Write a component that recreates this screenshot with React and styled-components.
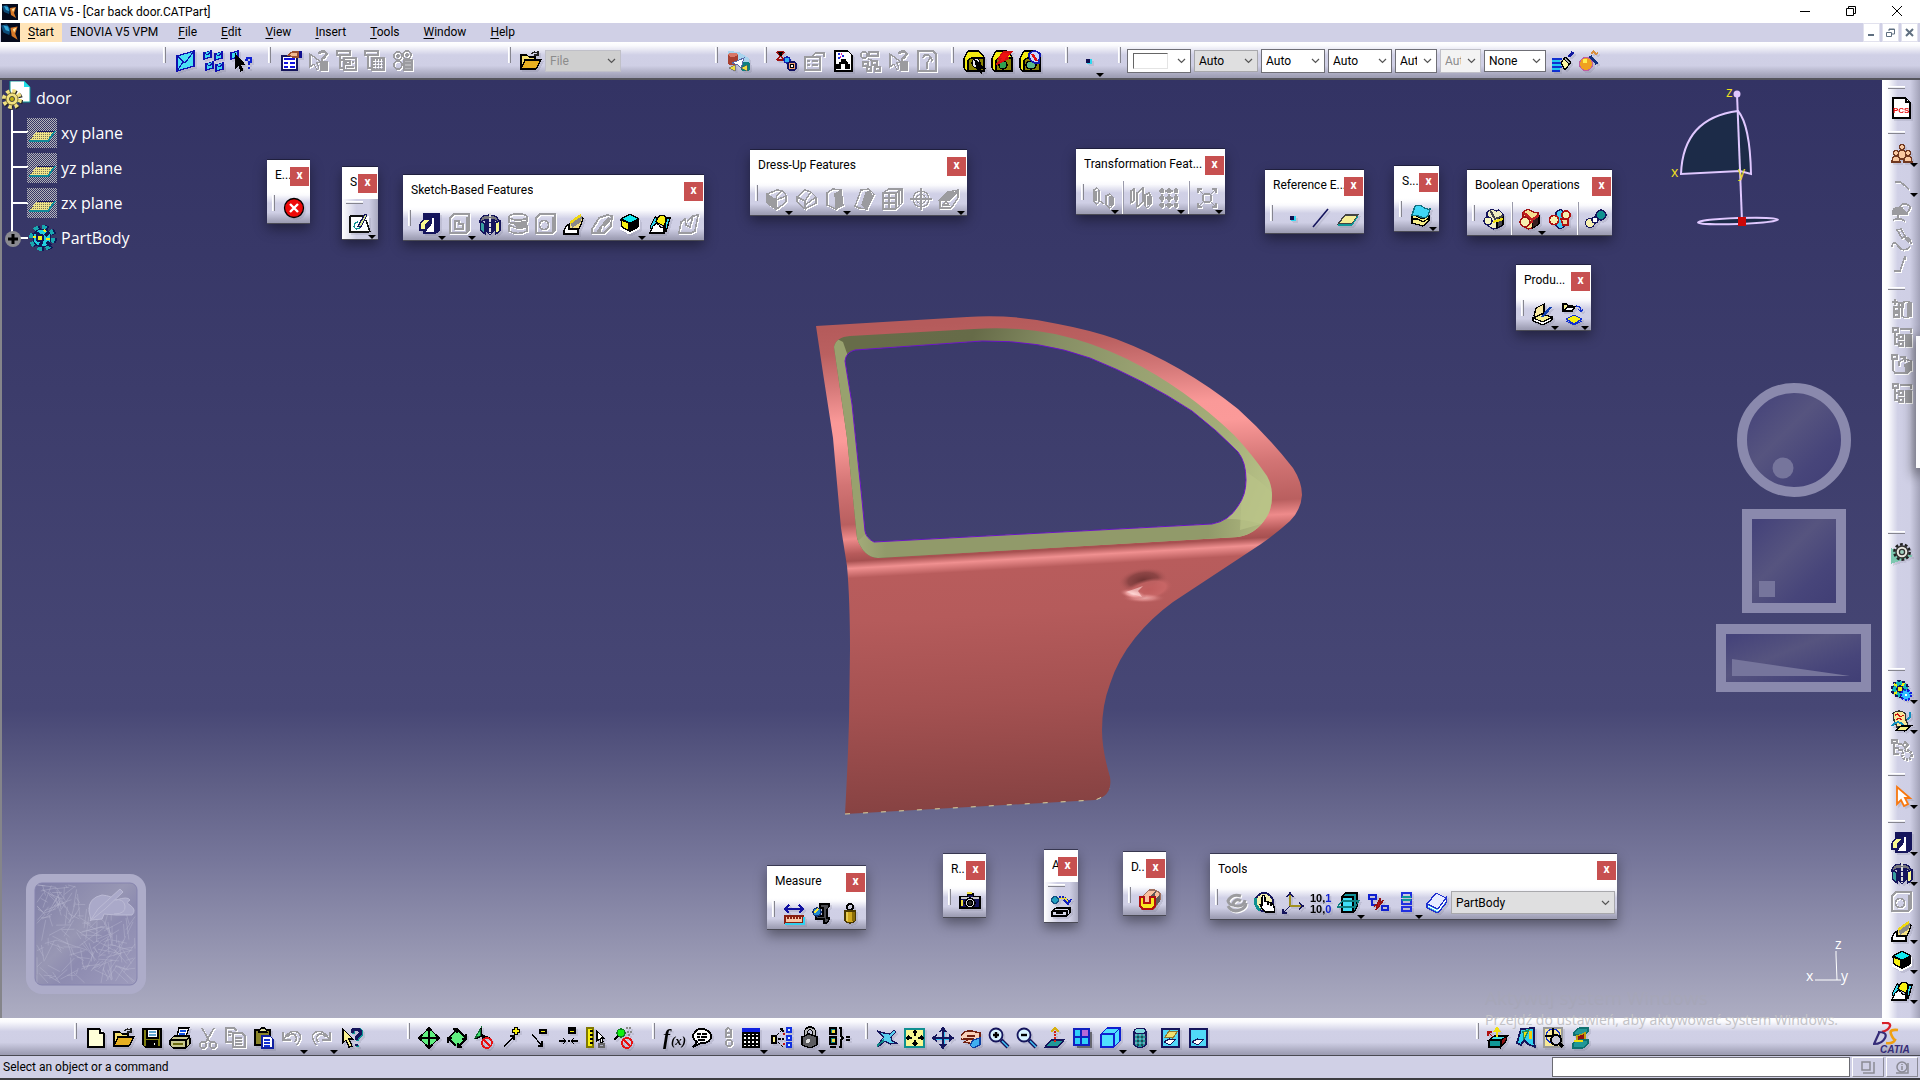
import React from "react";
import styled, { createGlobalStyle, css } from "styled-components";

const GlobalStyle = createGlobalStyle`
  * {
    box-sizing: border-box;
  }
  body {
    margin: 0;
    overflow: hidden;
    font-family: Roboto, "Open Sans", sans-serif;
    font-size: 12px;
    color: #000;
  }
  button, select, input {
    font: inherit;
    color: inherit;
  }
`;

const steelAcross = css`
  background: linear-gradient(
    to bottom,
    #ffffff 0,
    #fafafd 10%,
    #d0d0e6 36%,
    #cfcfe5 66%,
    #a2a2b8 94%,
    #9c9cb2 100%
  );
`;

const steelDown = css`
  background: linear-gradient(
    to right,
    #ffffff 0,
    #fafafd 12%,
    #d0d0e6 38%,
    #cfcfe5 72%,
    #a2a2b8 100%
  );
`;

const Page = styled.div`
  display: flex;
  flex-direction: column;
  height: 100vh;
  position: relative;
  overflow: hidden;
  background: #cfcfe5;
`;

const TitleBar = styled.header`
  display: flex;
  align-items: center;
  height: 23px;
  background: #fff;
  padding-left: 2px;
  svg {
    margin-right: 5px;
  }
`;

const WindowButtons = styled.div`
  display: flex;
  margin-left: auto;
  height: 100%;
  button {
    width: 46px;
    border: none;
    padding: 0;
    background: transparent;
    svg {
      display: block;
      margin: 0 auto 2px;
    }
  }
`;

const MenuBar = styled.nav`
  display: flex;
  align-items: stretch;
  height: 19px;
  padding-left: 1px;
  background: #d0d0e6;
`;

const MenuItem = styled.button`
  border: none;
  padding: 0 ${(p) => p.$pad || 12}px;
  line-height: 19px;
  background: ${(p) => (p.$active ? "#ffe4b8" : "transparent")};
  white-space: nowrap;
  u {
    text-underline-offset: 2px;
  }
`;

const DocButtons = styled.div`
  display: flex;
  gap: 2px;
  margin-left: auto;
  padding-right: 2px;
  button {
    width: 17px;
    padding: 0;
    border: 1px solid #e2e2ee;
    background: #fff;
    display: grid;
    place-items: center;
  }
`;

const Grip = styled.span`
  flex: none;
  width: 3px;
  height: 16px;
  margin-right: 5px;
  align-self: flex-start;
  margin-top: 3px;
  background: #ededf4;
  border-right: 1px solid #85858f;
  border-left: 1px solid #fff;
`;

const RailGrip = styled.span`
  width: 17px;
  height: 3px;
  margin: 0 0 5px 4px;
  background: #ededf4;
  border-top: 1px solid #fff;
  border-bottom: 1px solid #85858f;
`;

const TopBar = styled.div`
  display: flex;
  align-items: stretch;
  height: 38px;
  padding-top: 2px;
  border-bottom: 2px solid #55555c;
  ${steelAcross}
  ${Grip} {
    margin-right: 6px;
  }
`;

const Group = styled.div`
  display: flex;
  align-items: center;
  margin-left: ${(p) => p.$gap || 0}px;
`;

const Divider = styled.span`
  width: 2px;
  align-self: stretch;
  margin: 0 3px;
  background: #fff;
  border-right: 1px solid #9a9aaa;
`;

const Tool = styled.button`
  position: relative;
  flex: none;
  width: ${(p) => p.$w || (p.$more ? 30 : 28)}px;
  height: 28px;
  padding: 3px;
  border: none;
  background: transparent;
  text-align: left;
  svg {
    display: block;
    overflow: visible;
  }
  ${(p) =>
    p.$more &&
    css`
      &::after {
        content: "";
        position: absolute;
        right: 0;
        bottom: -2px;
        border: 4px solid transparent;
        border-top-color: #000;
        border-bottom: none;
      }
    `}
`;

const Svg = styled.svg`
  width: 22px;
  height: 22px;
  fill: none;
  stroke: #000;
  stroke-width: 1.3;
  shape-rendering: crispEdges;
  filter: ${(p) =>
    p.$off ? "drop-shadow(1px 1px 0 #fff)" : "drop-shadow(2px 2px 0 rgba(90,90,110,0.14))"};
`;

const SelectBox = styled.label`
  position: relative;
  flex: none;
  width: ${(p) => p.$w || 64}px;
  height: ${(p) => p.$h || 24}px;
  margin-right: 3px;
  color: ${(p) => (p.$off ? "#8c8c8c" : "#000")};
  select {
    appearance: none;
    display: block;
    width: 100%;
    height: 100%;
    padding: 0 19px 0 4px;
    border: 1px solid ${(p) => (p.$off ? "#c0c0c8" : p.$flat ? "#a8a8ac" : "#6f6f76")};
    border-radius: 0;
    background: ${(p) => (p.$flat ? (p.$off ? "#cfcfcf" : "#dfdfe0") : p.$off ? "#f3f3f3" : "#fff")};
    color: inherit;
    opacity: 1;
  }
  svg {
    position: absolute;
    right: 5px;
    top: 50%;
    margin-top: -3px;
    pointer-events: none;
  }
`;

const Swatch = styled.span`
  position: absolute;
  left: 6px;
  top: 4px;
  width: 35px;
  height: 16px;
  border: 1px solid #e4e4e4;
  border-top-color: #666;
  border-left-color: #666;
  background: #fff;
`;

const Middle = styled.div`
  display: flex;
  flex: 1;
  min-height: 0;
  position: relative;
`;

const Viewport = styled.main`
  position: relative;
  flex: 1;
  overflow: hidden;
  box-shadow: inset 2px 0 0 #85858a;
  background: linear-gradient(
    to bottom,
    #333364 0,
    #3c3c6b 33%,
    #474775 67%,
    #5f5f86 75%,
    #76769a 83%,
    #adadc2 100%
  );
`;

const Rail = styled.aside`
  width: 38px;
  border-left: 2px solid #fff;
  padding-top: 6px;
  ${steelDown}
`;

const RailGroup = styled.div`
  display: flex;
  flex-direction: column;
  margin-top: ${(p) => p.$gap || 0}px;
  ${Tool} {
    width: 28px;
    height: ${(p) => p.$pitch || 28}px;
    margin-left: 4px;
  }
  ${Tool}[data-more] {
    height: 30px;
    &::after {
      bottom: 2px;
      right: -2px;
    }
  }
`;

const EdgeWindow = styled.div`
  position: absolute;
  right: 0;
  top: 256px;
  width: 4px;
  height: 132px;
  background: #fbfbfd;
  box-shadow: 0 4px 12px 3px rgba(0, 0, 0, 0.45);
`;

const Tree = styled.ul`
  position: absolute;
  left: 2px;
  top: 0;
  margin: 0;
  padding: 0;
  list-style: none;
  color: #fff;
  font-family: "Open Sans", "Noto Sans", sans-serif;
  font-size: 16px;
  li {
    display: flex;
    align-items: center;
    height: 35px;
    padding-left: 25px;
  }
  li:first-child {
    padding-left: 0;
  }
  svg {
    display: block;
    margin-right: 4px;
  }
`;

const TreeLines = styled.svg`
  position: absolute;
  left: 0;
  top: 20px;
`;

const Palette = styled.section`
  position: absolute;
  left: ${(p) => p.$x}px;
  top: ${(p) => p.$y}px;
  width: ${(p) => p.$w}px;
  background: #fff;
  border-bottom: 1px solid #4a4a55;
  box-shadow: 0 -1px 0 rgba(20, 20, 40, 0.6), 0 5px 12px rgba(0, 0, 0, 0.4);
`;

const PaletteHead = styled.div`
  display: flex;
  justify-content: space-between;
  height: 32px;
  padding: 7px 1px 0 8px;
  h2 {
    margin: 0;
    min-width: 0;
    overflow: hidden;
    font-size: 12px;
    font-weight: 400;
    line-height: 16px;
    white-space: nowrap;
  }
  button {
    flex: none;
    width: 19px;
    height: 19px;
    padding: 0 0 2px;
    border: none;
    background: #c75050;
    color: #fff;
    font-size: 12px;
    font-weight: 700;
    line-height: 15px;
  }
`;

const PaletteBody = styled.div`
  display: flex;
  align-items: center;
  height: ${(p) => (p.$slim ? 31 : 33)}px;
  padding-left: 5px;
  ${steelAcross}
  ${(p) =>
    p.$column &&
    css`
      flex-direction: column;
      align-items: flex-start;
      height: 40px;
      padding: 2px 0 0 0;
      background: linear-gradient(to right, #fff 0, #cfcfe5 40%, #cfcfe5 75%, #a9a9bf 100%);
      ${Tool} {
        margin-left: 4px;
      }
    `}
`;

const DoorSvg = styled.svg`
  position: absolute;
  left: 810px;
  top: 230px;
`;

const CompassSvg = styled.svg`
  position: absolute;
  right: 94px;
  top: 5px;
  overflow: visible;
  font-family: "Open Sans", sans-serif;
  font-size: 14px;
`;

const PadsSvg = styled.svg`
  position: absolute;
  right: 10px;
  top: 300px;
`;

const SketchPadSvg = styled.svg`
  position: absolute;
  left: 26px;
  bottom: 24px;
`;

const AxisSvg = styled.svg`
  position: absolute;
  right: 31px;
  bottom: 31px;
  overflow: visible;
  font-family: "Open Sans", sans-serif;
  font-size: 14px;
`;

const BottomBar = styled.div`
  display: flex;
  align-items: stretch;
  height: 38px;
  padding: 2px 0 0 74px;
  border-bottom: 1px solid #4a4a52;
  ${steelAcross}
`;

const Logo = styled.svg`
  margin: 0 5px 0 auto;
  align-self: center;
`;

const Status = styled.footer`
  display: flex;
  align-items: center;
  gap: 2px;
  height: 24px;
  padding: 0 2px 0 3px;
  border-bottom: 2px solid #3c3c40;
  background: #d0d0e6;
  input {
    width: 298px;
    height: 20px;
    margin-left: auto;
    border: 1px solid #6b6b72;
    background: #fff;
  }
  button {
    width: 32px;
    height: 20px;
    padding: 0;
    border: 1px solid;
    border-color: #fff #8a8a96 #8a8a96 #fff;
    background: #d0d0e6;
    display: grid;
    place-items: center;
  }
`;

const Watermark = styled.div`
  position: absolute;
  right: 79px;
  bottom: 50px;
  width: 356px;
  pointer-events: none;
  white-space: nowrap;
  color: #c2c2c6;
  font-family: "Open Sans", "Noto Sans", sans-serif;
  font-size: 14px;
  line-height: 20px;
  strong {
    display: block;
    font-size: 19px;
    font-weight: 400;
    line-height: 24px;
    color: #a6a6b8;
  }
`;

const g = "#9b9b9f";
const navy = "#15155c";

const icons = {
  mail: (
    <>
      <path d="M2 6 19 1V16L2 21Z" fill="#4be0f5" stroke="#1010b0" />
      <path d="M2 6 10 13 19 1M2 21 8 12" stroke="#1010b0" />
    </>
  ),
  mails: (
    <g stroke="#1010b0" fill="#3fd8ee">
      <path d="M1 3 8 1V7L1 9ZM12 4 19 2V8L12 10ZM3 14 10 12V18L3 20ZM13 15 20 13V19L13 21Z" />
      <path d="M1 3 5 5 8 1M12 4 16 6 19 2M3 14 7 16 10 12M13 15 17 17 20 13" />
    </g>
  ),
  mailHelp: (
    <>
      <path d="M0 3 7 1V7L0 9Z" fill="#3fd8ee" stroke="#1010b0" />
      <path d="M5 5 13 14H9L12 20 10 21 8 15 5 18Z" fill="#000" />
      <path d="M14 10H16V8H20V12H18V15M17 18H19" stroke="#1020d0" strokeWidth="2.5" />
    </>
  ),
  form: (
    <>
      <rect x="2" y="6" width="15" height="14" fill="#fff" stroke={navy} />
      <path d="M4 9H15M4 13H8M10 13H15M4 17H8M10 17H15" stroke="#1010e0" strokeWidth="2" />
      <path d="M8 5 12 2H18V7H13Z" fill="#f0b890" stroke="#9a5030" />
      <path d="M20 1V8" stroke="#101090" strokeWidth="3" />
    </>
  ),
  cursorHelpOff: (
    <g stroke={g}>
      <path d="M2 4V17L6 14 9 20 11 18 9 13 13 12Z" />
      <path d="M11 4Q13 0 17 2T14 9V11" strokeWidth="2.5" />
      <path d="M13 12H19V20H13Z" fill={g} />
    </g>
  ),
  listOff: (
    <g stroke={g} strokeWidth="1.6">
      <path d="M1 1H14V5H1ZM4 5V18H8M4 10H8M8 8H20V20H8ZM10 11H14V14H10ZM10 17H18M16 12H18" />
    </g>
  ),
  list2Off: (
    <g stroke={g}>
      <path d="M1 1H14V5H1ZM4 5V18H7M8 8H20V20H8Z" strokeWidth="1.6" />
      <path d="M9 10H20M9 13H20M9 16H20M9 19H20" strokeDasharray="1.5 1.5" strokeWidth="2" />
    </g>
  ),
  gearsOff: (
    <g stroke={g} strokeWidth="1.6">
      <circle cx="6" cy="6" r="4" />
      <circle cx="15" cy="5" r="4" />
      <circle cx="6" cy="15" r="4" />
      <circle cx="15" cy="5" r="1" />
      <path d="M12 10H20V20H12ZM12 13H20M12 17H20" fill="#b6b6ba" />
      <circle cx="6" cy="6" r="1" />
    </g>
  ),
  open: (
    <>
      <path d="M1 19V5H7L9 7H15V10" fill="#f5e070" stroke="#000" />
      <path d="M1 19 5 10H21L16 19Z" fill="#e8b020" stroke="#000" />
      <path d="M11 4Q15 0 18 4M18 1V5H14" stroke="#222" />
    </>
  ),
  planes: (
    <>
      <path d="M1 1 12 2 22 8V16L1 10Z" fill="#a9d4ee" stroke="none" />
      <ellipse cx="6" cy="5" rx="5" ry="2.4" fill="#d87868" stroke="none" />
      <path d="M1 5V14Q6 17 11 14V5Q6 9 1 5" fill="#a84030" stroke="none" />
      <path d="M14 13V20Q18 23 23 20V13Q18 10 14 13" fill="#108080" stroke="none" />
      <path d="M5 13 17 8 14 18 11 15Z" fill="#fff" stroke="#5868a8" strokeWidth="1" />
      <path d="M2 18 8 15V21ZM20 15 14 18 20 21Z" fill="#f0e040" stroke="#555" strokeWidth=".6" />
    </>
  ),
  gearFlow: (
    <>
      <path d="M1 2H8M1 10H8M1 2 8 10M8 2 1 10" stroke="#a01010" strokeWidth="1.6" />
      <path d="M3 3H6L5 6Z" fill="#18a0a0" />
      <circle cx="11" cy="10" r="3" fill="#30b0f0" stroke="#1020b0" />
      <circle cx="16" cy="16" r="4.5" fill="#f0a070" stroke="#101060" strokeWidth="2" />
      <circle cx="16" cy="16" r="1.5" fill="#fff" />
    </>
  ),
  formOff: (
    <g stroke={g} strokeWidth="1.6">
      <path d="M1 7H16V20H1ZM3 11H6M8 11H14M3 15H6M8 15H14M8 6 12 3H20V7" />
    </g>
  ),
  pageGraph: (
    <>
      <path d="M3 1H16L20 5V21H3Z" fill="#fff" />
      <path d="M7 14 12 10 16 14" strokeWidth="2" />
      <path d="M5 15H8V18H5ZM14 15H17V18H14ZM10 10H13V13H10Z" fill="#000" />
      <path d="M6 4H8M10 6H12M6 8H8" stroke="#2030e0" strokeWidth="2" />
      <path d="M9 4H10M8 7H9" stroke="#e020a0" strokeWidth="2" />
    </>
  ),
  treeOff: (
    <g stroke={g} strokeWidth="1.6">
      <circle cx="4" cy="5" r="3" />
      <path d="M9 2H18V6H9ZM8 9 14 11M3 12H8V16H3ZM12 11H17V15H12ZM7 17H11V21H7ZM15 17H20V21H15Z" />
    </g>
  ),
  pageHelpOff: (
    <g stroke={g} strokeWidth="1.6">
      <path d="M2 1H17L20 4V21H2Z" />
      <path d="M7 8Q8 4 12 5T11 13V19M15 8Q17 10 15 12" />
    </g>
  ),
  blockA: (
    <>
      <path d="M1 8 5 1H16L21 7V21H3L1 18Z" fill="#f4ec10" />
      <path d="M8 8H21V21H5V10Z" fill="#8a8400" />
      <ellipse cx="13" cy="13" rx="4" ry="4.5" fill="#e8e8f0" />
      <path d="M12 10 21 18 17 18 18 23 14 19Z" fill="#000" />
    </>
  ),
  blockB: (
    <>
      <path d="M1 8 5 1H16L21 7V21H3L1 18Z" fill="#f4ec10" />
      <path d="M8 8H21V21H5V10Z" fill="#8a8400" />
      <ellipse cx="12" cy="15" rx="4" ry="4" fill="#30a050" />
      <path d="M12 2H21L15 8H18L5 15 10 9H7Z" fill="#f01010" stroke="#d01010" />
    </>
  ),
  blockC: (
    <>
      <path d="M1 8 5 1H16L21 7V21H3L1 18Z" fill="#f4ec10" />
      <path d="M8 8H21V21H5V10Z" fill="#8a8400" />
      <ellipse cx="12" cy="15" rx="5" ry="4" fill="#58b888" />
      <path d="M10 4Q16 -2 21 4L20 13Q10 14 10 4Z" fill="#c8d8ff" stroke="#1018b0" strokeWidth="1.8" />
      <path d="M13 4 18 11" stroke="#e01010" strokeWidth="2.4" />
    </>
  ),
  point: (
    <>
      <rect x="10" y="9" width="5" height="5" fill="#30d8f0" stroke="none" />
      <rect x="9" y="9" width="4" height="4" fill="#101050" stroke="none" />
    </>
  ),
  brush: (
    <>
      <path d="M0 9H10M0 13H12M0 17H10M0 21H8" stroke="#1030d0" strokeWidth="2" />
      <path d="M0 11H8M0 15H9M0 19H8" stroke="#20c8f0" strokeWidth="1.6" />
      <path d="M9 13 13 7 19 12 13 20Z" fill="#fff6a0" />
      <path d="M13 7 19 12 17 14 12 9Z" fill="#b0b0b0" />
      <path d="M17 7 21 2" stroke="#1018a0" strokeWidth="3" />
    </>
  ),
  ball: (
    <>
      <circle cx="6" cy="14" r="6.5" fill="#f0a020" stroke="#c060a0" />
      <circle cx="5" cy="11" r="2.5" fill="#ffee50" stroke="none" />
      <path d="M10 6 17 14" stroke="#103080" strokeWidth="3" />
      <path d="M11 3H18M13 1 17 5" stroke="#d89040" strokeDasharray="2 1" strokeWidth="2" />
    </>
  ),
  exit: (
    <>
      <circle cx="11" cy="11" r="9.5" fill="#ee0808" shapeRendering="auto" />
      <path d="M7 7 15 15M15 7 7 15" stroke="#fff" strokeWidth="2.4" shapeRendering="auto" />
    </>
  ),
  sketch: (
    <>
      <path d="M1 4H20V21H1Z" fill="#fff" stroke="none" />
      <path d="M1 4H14M1 4V20H20" stroke="#111" />
      <path d="M21 20 17 8" stroke="#111" />
      <path d="M5 15Q5 10 9 10M12 13Q11 17 7 17L5 15" stroke="#109090" />
      <path d="M9 14 16 2 18 3 12 15Z" fill="#d8e890" stroke={navy} />
    </>
  ),
  pad: (
    <>
      <path d="M5 1H20V18L17 20H5Z" fill={navy} stroke={navy} />
      <path d="M5 4H16V20H5Z" fill="#fff" stroke={navy} />
      <path d="M1 11 5 6H12L7 11V17H1Z" fill="#f8f890" stroke={navy} />
      <path d="M7 11 12 6V11L7 17Z" fill={navy} stroke={navy} />
    </>
  ),
  pocketOff: (
    <g stroke={g} strokeWidth="1.8">
      <path d="M1 5 5 1H20V17L17 20H1Z" />
      <path d="M6 8H10V11H14V16H6Z" />
      <path d="M18 4V19" strokeWidth="3" />
    </g>
  ),
  shaft: (
    <>
      <path d="M1 9Q1 2 10 2T20 9L15 7H6Z" fill="#77777c" stroke={navy} />
      <path d="M1 8 6 11V21L2 18Z" fill="#38a0a0" stroke={navy} />
      <path d="M7 7 10 8V21L7 18ZM12 8 15 7V18L12 21Z" fill={navy} stroke={navy} />
      <path d="M16 10 21 8V18L17 21Z" fill="#f8f890" stroke={navy} />
      <path d="M11 0V21" stroke="#ddd" strokeDasharray="4 1" />
    </>
  ),
  grooveOff: (
    <g stroke={g} strokeWidth="1.6">
      <ellipse cx="11" cy="4" rx="9" ry="3" />
      <path d="M2 4V9Q6 12 11 10L20 8V4M2 12V18Q11 23 20 18V13Q12 18 2 12" />
      <path d="M7 10 19 9V14L10 13Z" fill={g} />
    </g>
  ),
  holeOff: (
    <g stroke={g} strokeWidth="1.8">
      <path d="M1 5 5 1H20V17L17 20H1Z" />
      <circle cx="9" cy="12" r="4.5" />
      <path d="M18 4V19" strokeWidth="3" />
    </g>
  ),
  rib: (
    <>
      <path d="M6 11 17 2 20 5Q18 14 14 18L7 17Z" fill="#f4e080" />
      <path d="M8 10 19 3 18 9 9 15Z" fill="#8a8a8a" stroke="none" />
      <path d="M7 10 18 2" stroke="#f0d810" strokeWidth="2.4" />
      <path d="M1 18 4 12H6V16H15V21H1Z" fill="#fff" />
    </>
  ),
  slotOff: (
    <g stroke={g} strokeWidth="1.8">
      <path d="M1 16 8 5 16 2 21 3 20 13 13 20H8L11 12 6 20H1Z" />
      <path d="M12 13 19 5" strokeWidth="4" />
    </g>
  ),
  cube: (
    <>
      <path d="M1 15 10 20 20 15V7" stroke="#fff" strokeWidth="2.4" />
      <path d="M2 6 11 1 20 6 11 10Z" fill="#10e8f0" />
      <path d="M2 7 10 10V18L3 14Z" fill="#f8f010" />
      <path d="M12 10 19 7V14L12 18Z" fill="#000" />
    </>
  ),
  loft: (
    <>
      <path d="M1 14 6 4 9 5 4 20ZM16 12 18 5 21 5 17 19Z" fill="#30d8f0" />
      <path d="M7 9Q9 0 16 3Q18 6 15 13Z" fill="#f8f010" />
      <path d="M1 20 4 13Q8 9 10 12Q11 16 15 14L15 20Z" fill="#fff" />
    </>
  ),
  loftOff: (
    <g stroke={g} strokeWidth="1.6">
      <path d="M2 20 4 9 8 6 9 12 13 14 16 3 21 2 18 18 14 20ZM10 8 15 4M2 20H14" />
    </g>
  ),
  filletOff: (
    <g stroke={g} strokeWidth="1.4">
      <path d="M10 12 20 8V14L11 21Z" />
      <path d="M1 6 10 12V21L1 15Z" fill={g} />
      <path d="M1 6 11 2Q19 2 20 8L10 12Q10 6 15 4" />
    </g>
  ),
  chamferOff: (
    <g stroke={g} strokeWidth="1.4">
      <path d="M1 9 9 2 15 4 20 9V15L9 21 1 14ZM1 9 9 13 15 4M9 13V21M9 17 20 9" />
    </g>
  ),
  draftOff: (
    <g stroke={g} strokeWidth="1.4">
      <path d="M3 5 9 1 17 2 19 17 12 21 3 17Z" />
      <path d="M11 6 17 3 19 17 12 21Z" fill={g} />
    </g>
  ),
  shellOff: (
    <g stroke={g} strokeWidth="1.4">
      <path d="M1 18 7 2 15 1 20 6 13 21 5 20Z" />
      <path d="M8 17 12 5 16 3 18 8 12 20Z" fill={g} />
    </g>
  ),
  thickOff: (
    <g stroke={g} strokeWidth="1.4">
      <path d="M1 5 7 1H20V15L14 21H1ZM1 5H14V21M14 5 20 1M1 10H14M1 15H14M7 5V21M17 3V17" />
    </g>
  ),
  threadOff: (
    <g stroke={g} strokeWidth="1.4">
      <circle cx="11" cy="11" r="8" />
      <circle cx="11" cy="11" r="4.5" />
      <path d="M11 0V22M0 11H22" />
    </g>
  ),
  replaceOff: (
    <g stroke={g} strokeWidth="1.4">
      <path d="M2 12 10 4 20 2V10L13 20H2Z" />
      <path d="M2 12 9 5 19 4 12 12Z" fill={g} />
      <path d="M5 17 8 13 11 17Z" />
    </g>
  ),
  moveOff: (
    <g stroke={g} strokeWidth="1.4">
      <path d="M2 3 5 1 7 3V15L5 17 2 15ZM4 4V14M8 14 12 17M14 9 18 7 21 10V18L18 21 14 18Z" />
      <path d="M18 9V19" strokeWidth="3" />
    </g>
  ),
  mirrorOff: (
    <g stroke={g} strokeWidth="1.4">
      <path d="M1 4 4 2V14L1 16ZM7 6 13 1V15L7 20ZM15 8 19 6 21 10V17L17 21 15 19Z" />
      <path d="M18 9V18" strokeWidth="3" />
    </g>
  ),
  patternOff: (
    <g stroke={g} strokeWidth="1.4">
      <path d="M1 4H20M1 11H20M1 18H20M4 1V21M11 1V21M18 1V21" strokeDasharray="2 1" />
      <path d="M3 3H5V5H3ZM10 3H12V5H10ZM17 3H19V5H17ZM3 10H5V12H3ZM10 10H12V12H10ZM17 10H19V12H17ZM3 17H5V19H3ZM10 17H12V19H10ZM17 17H19V19H17Z" fill={g} />
    </g>
  ),
  scaleOff: (
    <g stroke={g} strokeWidth="1.4">
      <circle cx="11" cy="11" r="4.5" strokeWidth="2" />
      <path d="M2 6V2H6M2 2 7 7M16 2H20V6M20 2 15 7M2 16V20H6M2 20 7 15M20 16V20H16M20 20 15 15" />
    </g>
  ),
  line: <path d="M4 20 19 2" stroke={navy} strokeWidth="1.6" shapeRendering="auto" />,
  plane: (
    <>
      <path d="M1 17 8 8H21L15 17Z" fill="#f6ee98" stroke="#444" />
      <path d="M1 18H15L21 9" stroke="#109898" />
    </>
  ),
  surface: (
    <>
      <path d="M2 12 5 11 12 15 19 12V17L13 22 2 19Z" fill="#f6ee88" />
      <path d="M2 15 8 15 13 18 19 14" />
      <path d="M5 2Q9 0 13 3T20 5L18 12Q15 15 11 13T2 11Z" fill="#40d8f8" stroke="#107080" />
    </>
  ),
  boolA: (
    <>
      <path d="M4 4 9 1 13 3 16 2 20 6V17L15 20 10 21 4 17Z" fill="#f0eec0" stroke={navy} />
      <path d="M14 12 20 9V17L14 20Z" fill="#44444c" />
      <path d="M7 2 12 11 20 8" stroke="#44444c" strokeWidth="2" />
      <path d="M10 14 20 11" stroke="#f0e010" strokeWidth="2.4" />
      <ellipse cx="5" cy="13" rx="4" ry="4" fill="#f6f6c0" stroke={navy} />
    </>
  ),
  boolB: (
    <>
      <path d="M4 4 9 1 14 4 19 5V17L13 20 9 21 4 18Z" fill="#f6e090" stroke="#a01010" />
      <path d="M13 12 20 8V16L14 20Z" fill="#3a2020" />
      <path d="M4 4 13 12 20 7" stroke="#c02020" strokeWidth="2.4" />
      <path d="M9 15 14 14" stroke="#c02020" strokeWidth="2" />
      <ellipse cx="6" cy="14" rx="5" ry="5" fill="#f6f0b0" stroke="#a01010" />
    </>
  ),
  boolC: (
    <>
      <path d="M7 4 12 1 15 5V19L11 21 7 18Z" fill="#40c8f0" stroke={navy} />
      <circle cx="17" cy="7" r="4" fill="#f6f0b0" stroke="#b01010" strokeWidth="1.8" />
      <path d="M12 11H19V17H14Z" fill="#f0d8a0" stroke="#b01010" />
      <circle cx="5" cy="12" r="4.5" fill="#f6f0b0" stroke="#b01010" strokeWidth="1.8" />
    </>
  ),
  boolD: (
    <>
      <circle cx="5" cy="15" r="4.5" fill="#f6f0b0" stroke={navy} />
      <circle cx="10" cy="12" r="3" fill="#fff" stroke={navy} />
      <circle cx="16" cy="7" r="5" fill="#109090" stroke={navy} />
    </>
  ),
  bookPen: (
    <>
      <path d="M2 13 4 5 12 1V11L7 16Z" fill="#f8e8a0" />
      <path d="M1 15 10 11 20 14 11 20Z" fill="#f6f090" />
      <path d="M1 15V18L11 22 20 17V14L11 19Z" fill="#fff" />
      <path d="M10 14 19 4" stroke="#1040b0" strokeWidth="2.4" />
    </>
  ),
  bookMove: (
    <>
      <path d="M1 8V1H5L6 3H10V8Z" fill="#f6f090" />
      <path d="M2 8 5 4H13L10 8Z" fill="#fff" />
      <path d="M14 3Q19 3 19 8M16 6 19 9 21 6" stroke="#1030d0" />
      <path d="M4 16 12 12 20 16 12 21Z" fill="#f8f010" stroke="#1030d0" />
      <path d="M4 18 12 22 20 18" stroke="#1030d0" />
    </>
  ),
  ruler: (
    <>
      <path d="M2 6H20M6 2 2 6 6 10M16 2 20 6 16 10" stroke="#1010a0" strokeWidth="1.6" />
      <path d="M2 13H20V20H2Z" fill="#f8c8a8" stroke="#8a2010" />
      <path d="M5 13V16M8 13V16M11 13V16M14 13V16M17 13V16" stroke="#8a2010" />
      <path d="M2 21H21V14" stroke="#30d0f0" strokeWidth="1.6" />
    </>
  ),
  caliper: (
    <>
      <path d="M9 1H18V4L16 6V15H18V17L16 20H13V16H5V13H12V5H9Z" fill="#4a4a50" />
      <circle cx="6" cy="9" r="4" fill="#2088d0" stroke="#103070" />
      <path d="M3 10 7 6" stroke="#f0e840" strokeWidth="2" />
    </>
  ),
  weight: (
    <>
      <circle cx="11" cy="4" r="3" strokeWidth="2" />
      <path d="M6 8H16V18Q11 22 6 18Z" fill="#d0a820" stroke="#4a3800" />
      <path d="M14 9V18" stroke="#8a6c08" strokeWidth="3" />
      <path d="M8 9V18" stroke="#e8cc50" strokeWidth="2" />
    </>
  ),
  camera: (
    <>
      <path d="M1 6H8L9 3H14L15 6H21V17H1Z" fill={navy} stroke="#000" />
      <path d="M2 7H20" stroke="#c8c8c8" strokeWidth="2" />
      <circle cx="11" cy="12" r="5" fill="#d8d8e0" />
      <circle cx="11" cy="12" r="2.6" fill="#222" />
      <path d="M8 2H13M3 9V15" stroke="#f0e040" />
    </>
  ),
  applyBox: (
    <>
      <circle cx="4" cy="5" r="3.4" fill="#20a0c0" stroke="#105080" />
      <path d="M8 3H14L18 7" stroke="#f0e040" strokeWidth="2" />
      <path d="M8 2H14L18 6" stroke="#1020c0" strokeDasharray="2 1" />
      <path d="M13 5 17 9 20 4" stroke="#1020c0" strokeWidth="2" />
      <path d="M1 16 5 13H19V18L16 21H1ZM1 16H16V21M16 16 19 13M5 18H12" fill="#d8d8ea" />
    </>
  ),
  channel: (
    <>
      <path d="M2 9 10 1H16L21 4V11L15 20H3Z" fill="#f8c0a0" stroke="#a07060" />
      <path d="M10 9 17 1 15 12ZM15 12 21 5V12L15 19Z" fill="#605858" stroke="none" />
      <path d="M1 8H5V14H11V8H16V17L13 20H4L1 17Z" fill="#f8e820" stroke="#b01010" strokeWidth="1.8" />
    </>
  ),
  swirlOff: (
    <g stroke={g} strokeWidth="3" shapeRendering="auto">
      <path d="M15 9Q11 6 8 10T12 14Q18 14 19 8M7 13Q3 13 2 9Q6 1 15 4" />
      <path d="M2 14Q6 21 14 18Q20 16 20 11" />
    </g>
  ),
  hand: (
    <>
      <circle cx="10" cy="10" r="9" fill="#f4f0b0" stroke={navy} strokeWidth="2" />
      <path d="M2 6Q0 14 6 18" stroke="#109090" strokeWidth="3" />
      <path d="M8 13V5Q10 2 11 5V9L18 11Q21 13 20 20H11Q8 17 6 13Z" fill="#fff" />
      <path d="M14 10V13M17 11V14" />
    </>
  ),
  axes: (
    <>
      <path d="M8 3V14H20" stroke="#a09020" strokeWidth="1.6" />
      <path d="M8 14 1 21" stroke={navy} />
      <path d="M5 5 8 1 11 5M17 11 21 14 17 17M1 17V21H5" stroke={navy} strokeWidth="1.6" />
    </>
  ),
  numbers: (
    <g stroke="none" fontFamily="Liberation Sans, sans-serif" fontSize="11" fontWeight="700">
      <text x="0" y="10" fill="#000">10,<tspan fill="#1020d0">1</tspan></text>
      <text x="0" y="21" fill="#000">10,<tspan fill="#1020d0">0</tspan></text>
    </g>
  ),
  book: (
    <>
      <path d="M4 5 7 1H19V15L16 20H4Z" fill="#109098" />
      <path d="M4 5H15V20H4Z" fill="#40e0f8" />
      <path d="M0 14 4 9H21L17 15H0Z" stroke="#108080" />
    </>
  ),
  flash: (
    <>
      <path d="M1 3H8V7H1ZM4 7V13H8" stroke="#1020d0" />
      <path d="M14 14H20V18H14Z" stroke="#1020d0" />
      <path d="M9 12 12 6 12 10 15 9 8 18 9 13 6 14Z" fill="#c01010" stroke="#901010" />
    </>
  ),
  stack: (
    <>
      <path d="M6 1H15V5H6ZM6 15H15V19H6Z" stroke="#2030e0" strokeWidth="1.6" />
      <path d="M6 8H15V12H6Z" stroke="#2030e0" strokeWidth="1.6" />
      <path d="M6 5H15M6 8H15" stroke="#109898" />
    </>
  ),
  eraser: (
    <>
      <path d="M1 12 10 1 20 6 12 17Z" fill="#e8ecff" stroke="#2030d0" />
      <path d="M1 12V16L12 21 20 11V6L12 17Z" fill="#60d8e8" stroke="#2030d0" />
      <path d="M2 14 12 19 20 8" stroke="#fff" />
    </>
  ),
  newFile: (
    <>
      <path d="M3 2H15L19 6V20H3Z" fill="#ffffd8" />
      <path d="M15 2V6H19" fill="#fff" />
    </>
  ),
  save: (
    <>
      <path d="M2 2H20V20H4L2 18Z" fill="#808010" />
      <path d="M6 2H17V11H6Z" fill="#fff" />
      <path d="M8 5H15M8 8H15" stroke="#60a8d0" />
      <path d="M6 14H16V20H6Z" fill="#000" />
      <path d="M12 15H15V19H12Z" fill="#fff" />
    </>
  ),
  print: (
    <>
      <path d="M8 9 10 1H20L17 10Z" fill="#fff" />
      <path d="M11 4H17M10 7H16" stroke="#1050e0" />
      <path d="M1 13 5 9H20L21 12V17L17 21H4L1 18Z" fill="#c8c890" />
      <path d="M1 13H17L21 10M17 13V21" />
      <path d="M4 17H14" stroke="#6a6a10" strokeWidth="2.4" />
    </>
  ),
  cutOff: (
    <g stroke={g} strokeWidth="1.6">
      <path d="M5 1 13 15M17 1 9 15" />
      <circle cx="6" cy="18" r="3" />
      <circle cx="16" cy="18" r="3" />
    </g>
  ),
  copyOff: (
    <g stroke={g} strokeWidth="1.6">
      <path d="M7 15H1V1H9L12 4M8 6H17L20 9V20H8ZM10 11H17M10 14H17M10 17H17M3 5H7M3 8H6" />
    </g>
  ),
  paste: (
    <>
      <path d="M2 3H17V18H2Z" fill="#8a8428" />
      <path d="M6 5 8 1H12L14 5Z" fill="#e0e0a0" />
      <path d="M9 9H17L20 12V21H9Z" fill="#fff" stroke="#1020a0" />
      <path d="M11 13H17M11 16H17M11 19H17" stroke="#1030d0" />
    </>
  ),
  undoOff: (
    <g stroke={g} strokeWidth="1.6">
      <path d="M2 5V13H10M2 13Q9 2 16 5T16 18M6 10Q11 5 14 8T14 15" />
    </g>
  ),
  redoOff: (
    <g stroke={g} strokeWidth="1.6">
      <path d="M19 5V13H11M19 13Q12 2 5 5T5 18M15 10Q10 5 7 8T7 15" />
    </g>
  ),
  whatsThis: (
    <>
      <path d="M2 2V16L5 13 8 20 11 19 8 12H12Z" fill="#f8f090" />
      <path d="M12 7V4L14 2H18L20 4V8L16 12V14M16 18V20" stroke="#109898" strokeWidth="3" />
      <path d="M11 6V4L13 2H17L19 4V7L15 11V13M15 17V19" stroke={navy} strokeWidth="3" />
    </>
  ),
  moveDiamond: (
    <>
      <path d="M11 1 21 11 11 21 1 11Z" fill="#60f080" />
      <path d="M11 1V21M1 11H21M8 4 11 1 14 4M8 18 11 21 14 18M4 8 1 11 4 14M18 8 21 11 18 14" strokeWidth="1.7" />
    </>
  ),
  turnDiamond: (
    <>
      <path d="M11 2 20 11 11 20 2 11Z" fill="#60f080" stroke="none" />
      <path d="M2 12 10 3M7 2 11 2 11 6M12 3 20 11M20 7V12H16M20 12 12 20M16 20H12V16M10 19 2 11M2 16V11H6" strokeWidth="1.7" />
    </>
  ),
  noMove: (
    <>
      <path d="M1 11 7 1V9Z" fill="#40e070" stroke="#107030" />
      <path d="M7 1 8 8 16 11H8" fill="#208040" />
      <path d="M1 12 8 9 16 12" />
      <circle cx="13" cy="16" r="5" stroke="#e81010" strokeWidth="1.6" />
      <path d="M10 13 16 19" stroke="#e81010" strokeWidth="1.6" />
    </>
  ),
  arrowPlus: (
    <>
      <path d="M2 20 12 9M8 9H12V13" />
      <path d="M14 0V8M10 4H18" stroke="#000" strokeWidth="4" />
      <path d="M14 1V7M11 4H17" stroke="#f8f010" strokeWidth="2" />
    </>
  ),
  arrowMinus: (
    <>
      <path d="M2 7 12 19M12 14V19H8" />
      <path d="M10 3H16V6H10Z" fill="#f8f010" />
    </>
  ),
  arrowEqual: (
    <>
      <path d="M1 14H8M5 11 8 14 5 17M20 14H13M16 11 13 14 16 17M10 14H12" />
      <path d="M11 1H17V6H11ZM11 3H17" fill="#f8f010" />
    </>
  ),
  rulerPick: (
    <>
      <path d="M1 1H7V20H1Z" fill="#f8f010" stroke="#807800" />
      <path d="M4 4H7M4 8H7M4 12H7M4 16H7" />
      <path d="M11 4V14L14 12 15 16 17 15 16 11H18Z" fill="#fff" />
      <path d="M13 17H18V20H13Z" stroke="#666" />
    </>
  ),
  noEntry: (
    <>
      <circle cx="7" cy="6" r="4" fill="#10f010" stroke="#108020" />
      <path d="M4 9 0 13" strokeWidth="2.5" />
      <path d="M12 1H18M13 5H18M14 8H17" stroke="#888" strokeDasharray="2 1" />
      <circle cx="13" cy="16" r="5" stroke="#e81010" strokeWidth="1.6" />
      <path d="M10 13 16 19" stroke="#e81010" strokeWidth="1.6" />
    </>
  ),
  formula: (
    <g stroke="none" fill="#000" fontFamily="Liberation Serif, serif" fontStyle="italic" fontWeight="700">
      <text x="0" y="17" fontSize="21">f</text>
      <text x="8" y="18" fontSize="13">(x)</text>
    </g>
  ),
  comment: (
    <>
      <path d="M2 20 6 15Q-1 11 4 5T17 4Q23 9 18 14Q14 17 10 16Z" fill="#fff" strokeWidth="1.8" />
      <path d="M6 7H10M11 7H16M6 10H9M10 10H16M7 13H14" />
    </>
  ),
  figureOff: (
    <g stroke={g} strokeWidth="1.6">
      <path d="M7 10V3L9 1 12 3V10ZM7 6H12" />
      <circle cx="10" cy="16" r="3" />
    </g>
  ),
  table: (
    <>
      <path d="M2 2H18V6H2Z" fill="#1020e0" stroke="#1020e0" />
      <path d="M2 6H18V20H2ZM2 9H18M2 13H18M2 17H18M6 6V20M10 6V20M14 6V20" fill="#fff" />
    </>
  ),
  relations: (
    <>
      <path d="M1 9H5V16H1Z" fill="#f8f090" />
      <path d="M6 8 12 2M9 2H12V5M7 12H13M7 15 12 20" strokeDasharray="3 1" />
      <path d="M16 1H20V5H16ZM16 9H20V13H16ZM16 16H20V20H16Z" stroke="#1030e0" fill="#d8f4ff" />
      <path d="M12 7H14M12 17H14" stroke="#c01010" strokeWidth="2" />
    </>
  ),
  lock: (
    <>
      <path d="M7 9V4Q11 -2 15 4V9" strokeWidth="4" />
      <path d="M7 9V4Q11 -1 15 4V9" stroke="#b8b8b8" strokeWidth="1.6" />
      <path d="M3 10 10 7 18 10V18L11 21 3 18Z" fill="#5c5c60" />
      <circle cx="9" cy="14" r="2" fill="#ddd" stroke="none" />
    </>
  ),
  brace: (
    <>
      <path d="M1 1H7V7H1ZM1 10H7V17H1Z" fill="#108888" />
      <path d="M3 3H6V6H3ZM3 12H6V15H3Z" fill="#f0e040" stroke="none" />
      <path d="M10 1H12V9L14 11 12 13V20H10M17 10H21M17 13H21M1 20H7" strokeWidth="1.5" />
    </>
  ),
  fly: (
    <>
      <path d="M1 4 8 6 14 7 18 3 20 5 15 10 16 14 21 16 14 17 9 14 3 19 5 13 8 10Z" fill="#58d0f0" stroke={navy} />
      <path d="M1 19 8 13" stroke="#108888" strokeWidth="2" />
    </>
  ),
  fit: (
    <>
      <path d="M1 2H20V20H1Z" fill="#f8f890" stroke="#109090" strokeWidth="2" />
      <path d="M11 4V9M9 6 11 4 13 6M11 13V18M9 16 11 18 13 16M3 11H8M5 9 3 11 5 13M14 11H19M17 9 19 11 17 13" strokeWidth="1.6" />
    </>
  ),
  pan: (
    <>
      <path d="M11 2V20M2 11H20" stroke="#30c0f0" strokeWidth="3" />
      <path d="M11 2V20M2 11H20M8 5 11 1 14 5M8 17 11 21 14 17M5 8 1 11 5 14M17 8 21 11 17 14" stroke={navy} strokeWidth="1.8" />
    </>
  ),
  rotate: (
    <>
      <path d="M1 9Q4 3 12 4L20 6V14L14 17 4 15 8 13 1 12" fill="#f8d0b8" stroke="#702010" />
      <path d="M3 12H14M7 9H15" stroke="#702010" />
      <path d="M13 13 20 11V18L13 21 10 18Z" fill="#40b0f0" stroke="#1040a0" />
    </>
  ),
  zoomIn: (
    <g shapeRendering="auto">
      <circle cx="8" cy="8" r="6.5" fill="#d8f4ff" stroke={navy} strokeWidth="1.8" />
      <path d="M13 13 20 20" stroke={navy} strokeWidth="4" />
      <path d="M14 14 20 20" stroke="#40c8f8" strokeWidth="1.4" />
      <path d="M8 5V11M5 8H11" strokeWidth="2.4" />
    </g>
  ),
  zoomOut: (
    <g shapeRendering="auto">
      <circle cx="8" cy="8" r="6.5" fill="#d8f4ff" stroke={navy} strokeWidth="1.8" />
      <path d="M13 13 20 20" stroke={navy} strokeWidth="4" />
      <path d="M14 14 20 20" stroke="#40c8f8" strokeWidth="1.4" />
      <path d="M5 8H11" strokeWidth="2.4" />
    </g>
  ),
  normal: (
    <>
      <path d="M1 20 7 13H20L14 20Z" fill="#209898" stroke={navy} />
      <path d="M11 15V3" stroke="#d02010" strokeWidth="2" strokeDasharray="2 1" />
      <path d="M7 5 11 1 15 5" stroke="#d8b010" strokeWidth="2" />
    </>
  ),
  views: (
    <>
      <path d="M5 5H20V21H5Z" fill="#66666e" stroke="none" />
      <path d="M2 2H17V18H2Z" fill="#30d0f8" stroke="#1020c0" strokeWidth="1.6" />
      <path d="M10 3H16V9H10Z" fill="#b868d8" stroke="none" />
      <path d="M9 2V18M2 10H17" stroke="#1020c0" strokeWidth="1.6" />
    </>
  ),
  box: (
    <path d="M1 7 7 1H20V14L14 20H1ZM1 7H14V20M14 7 20 1" fill="#50e0ff" stroke="#1020d0" />
  ),
  cylinder: (
    <>
      <path d="M4 4Q10 -1 16 4V18Q10 23 4 18Z" fill="#209898" stroke={navy} />
      <path d="M5 8H16M5 12H16M5 16H16" stroke="#70a8b8" strokeDasharray="2 2" strokeWidth="2" />
      <path d="M7 10H16M7 14H16M7 18H14" stroke="#204858" strokeDasharray="2 2" strokeWidth="2" />
      <ellipse cx="10" cy="4" rx="6" ry="2.6" fill="#80d8e0" stroke={navy} />
    </>
  ),
  hideShow: (
    <>
      <path d="M2 2H19V20H2Z" fill="#50d8f8" stroke={navy} strokeWidth="1.6" />
      <path d="M5 10 9 4 17 5 13 11Z" fill="#f0e070" stroke="#907830" />
      <path d="M4 15 9 12 15 13 10 18Z" fill="#fff" stroke={navy} />
    </>
  ),
  swapSpace: (
    <>
      <path d="M2 2H19V20H2Z" fill="#50d8f8" stroke={navy} strokeWidth="1.6" />
      <path d="M4 15 9 12 15 13 10 18Z" fill="#fff" stroke={navy} />
    </>
  ),
  draftCheck: (
    <>
      <path d="M2 13 7 9H20L14 20H2Z" fill="#109898" />
      <path d="M14 13 20 9 19 14 14 20Z" fill="#901010" />
      <path d="M2 13H14L20 9H7Z" fill="#40e0e8" />
      <path d="M10 10V2M7 5 10 1 13 5" stroke="#f0e010" strokeWidth="2" />
      <path d="M6 10 1 5M1 9V5H5" stroke="#b01010" />
    </>
  ),
  curvature: (
    <>
      <path d="M2 16 6 2 19 1 19 15 20 20 13 17 9 13 6 18Z" fill="#30d0f0" stroke={navy} strokeWidth="1.8" />
      <path d="M8 5 14 3 9 12Z" fill="#f0e010" stroke="#209060" />
      <path d="M16 4 15 12" stroke="#f0d010" strokeWidth="3" />
    </>
  ),
  tapTool: (
    <>
      <path d="M1 1H19V20H1Z" fill="#f8e898" stroke="#999" />
      <circle cx="10" cy="9" r="7" stroke="#1030d0" />
      <path d="M10 1V18M2 9H18" />
      <circle cx="13" cy="13" r="5" fill="#c8c8d8" strokeWidth="1.8" />
      <path d="M17 17 20 20" strokeWidth="3" />
    </>
  ),
  beam: (
    <>
      <path d="M3 5 8 1H17V5L12 8H3Z" fill="#209898" stroke="#107070" />
      <path d="M6 9 14 6V13L6 15Z" fill="#901010" stroke="#c0a010" />
      <path d="M2 16 8 13H17V17L12 21H2Z" fill="#209898" stroke="#107070" />
      <path d="M3 14H12" stroke="#f0e010" strokeWidth="2" />
    </>
  ),
  pcs: (
    <>
      <path d="M2 1H15L19 5V21H2Z" fill="#fff" />
      <path d="M15 1V5H19" />
      <text x="2" y="16" fontSize="8" fontWeight="700" fontFamily="Liberation Sans, sans-serif" fill="#e81010" stroke="none">PCS</text>
    </>
  ),
  people: (
    <g fill="#f8c8a0" stroke="#703820">
      <path d="M7 13Q7 7 11 7T15 13V16H7Z" />
      <circle cx="11" cy="4" r="2.6" />
      <path d="M1 19Q1 13 5 13T9 19ZM13 19Q13 13 17 13T21 19Z" />
      <circle cx="5" cy="10" r="2.6" />
      <circle cx="17" cy="10" r="2.6" />
    </g>
  ),
  curveOff: <path d="M4 9Q9 8 12 11T18 16" stroke={g} strokeWidth="1.6" />,
  pinOff: (
    <g stroke={g} strokeWidth="1.6">
      <path d="M2 9Q3 4 11 6L16 12H2Z" fill={g} />
      <path d="M9 5Q12 0 17 3T15 11M7 13V17M2 18Q8 15 14 19" />
    </g>
  ),
  handOff: (
    <g stroke={g} strokeWidth="1.6">
      <path d="M6 2 10 1 14 8 11 10ZM13 9Q20 9 20 16M1 19Q2 11 7 18T19 19" />
      <path d="M15 10 19 14" strokeWidth="3" />
    </g>
  ),
  angleOff: <path d="M14 2 9 17H3M14 2V6" stroke={g} strokeWidth="1.6" />,
  setA: (
    <g stroke={g} strokeWidth="1.5">
      <path d="M4 1V7M1 4H7M3 9H8V13H3ZM3 15H8V19H3ZM8 5H12V9H8Z" />
      <path d="M11 5Q15 2 20 5V18Q14 21 11 18Z" />
      <path d="M18 5V19" strokeWidth="4" />
    </g>
  ),
  setB: (
    <g stroke={g} strokeWidth="1.5">
      <path d="M2 2H7V6H2ZM4 6V18H8M4 11H8M8 9H12V13H8ZM8 16H12V20H8ZM9 3H20V7" />
      <path d="M15 9H20V20H15Z" fill={g} />
    </g>
  ),
  setC: (
    <g stroke={g} strokeWidth="1.5">
      <path d="M1 1H6V5H1ZM2 5V16L4 19H16L20 16V7L13 5 8 8V12M9 3H14V8" />
      <path d="M14 11 20 8V16L15 19Z" fill={g} />
    </g>
  ),
  gear: (
    <>
      <path d="M0 6 22 14 0 22Z" fill="#7cc8b0" stroke="none" />
      <g shapeRendering="auto">
        <circle cx="11" cy="10" r="7.600" stroke="#222" strokeWidth="2.6" strokeDasharray="2.800 2" />
        <circle cx="11" cy="10" r="6" fill="#e8e8e0" stroke="#333" strokeWidth="1.4" />
        <circle cx="11" cy="10" r="2.6" fill="#a0d0c0" stroke="#333" />
      </g>
    </>
  ),
  gearsColor: (
    <>
      <circle cx="9" cy="9" r="8" fill="#10b8b8" stroke={navy} strokeDasharray="3 2" strokeWidth="2.4" />
      <circle cx="9" cy="9" r="3" fill="#f0f010" stroke={navy} />
      <path d="M3 4 6 6M13 3 11 6M3 14 6 12" stroke="#f0f010" strokeWidth="2" />
      <circle cx="15" cy="15" r="5" fill="#30c0ff" stroke="#1020e0" strokeDasharray="2 1.5" strokeWidth="2.4" />
      <circle cx="15" cy="15" r="1.4" fill="#fff" stroke="none" />
    </>
  ),
  profile: (
    <>
      <path d="M2 3Q8 -1 14 3L15 10 17 15 6 17 3 10Z" fill="#f8e898" stroke="#333" />
      <path d="M4 5 7 4 9 7 13 5M5 10 8 8 11 10" stroke="#d01010" />
      <path d="M1 16Q7 9 12 15M16 10 19 7V2" stroke="#1090c0" strokeWidth="2" />
      <path d="M5 20 10 16H20L14 21Z" fill="#f8f080" />
    </>
  ),
  publishOff: (
    <g stroke={g} strokeWidth="1.5">
      <path d="M1 1H6V4H1ZM3 4V15H8M3 9H8M7 5H11M7 11H12M14 3 17 6 14 9 12 6Z" />
      <circle cx="16" cy="16" r="4.5" strokeWidth="3" strokeDasharray="2 1" />
    </g>
  ),
  select: (
    <path d="M6 2V19L10 15 13 21 17 19 14 13H19Z" fill="#fff" stroke="#f87810" strokeWidth="1.8" shapeRendering="auto" />
  ),
};

const Icon = ({ name }) => (
  <Svg viewBox="0 0 22 22" $off={name.endsWith("Off") || name.startsWith("set")} aria-hidden="true">
    {icons[name]}
  </Svg>
);

// a "+" at the end of a name adds the drop-down mark
const Tools = ({ names }) =>
  names.split(" ").map((n, i) => {
    if (n === "|") return <Divider key={i} />;
    const more = n.endsWith("+");
    const name = more ? n.slice(0, -1) : n;
    return (
      <Tool
        key={i}
        type="button"
        aria-label={name}
        $more={more}
        $w={name === "figureOff" ? 22 : undefined}
        data-more={more || undefined}
      >
        <Icon name={name} />
      </Tool>
    );
  });

const Chevron = () => (
  <svg width="9" height="6" viewBox="0 0 9 6" fill="none" stroke="#555" strokeWidth="1.2">
    <path d="M1 1 4.500 4.500 8 1" />
  </svg>
);

const Drop = ({ label, value, children, ...rest }) => (
  <SelectBox {...rest}>
    <select aria-label={label} disabled={rest.$off} defaultValue={value}>
      <option value={value}>{value}</option>
    </select>
    {children}
    <Chevron />
  </SelectBox>
);

const AppIcon = ({ size }) => (
  <svg width={size} height={size} viewBox="0 0 16 16">
    <rect width="16" height="16" fill="#050a1c" />
    <path d="M0 2 5 1 8 5 7 10 2 8Z" fill="#0c4a78" />
    <path d="M2 2 6 3 7 7 4 6Z" fill="#35a8d8" />
    <path d="M8 4 14 3 12 9 14 14 9 11Z" fill="#d87828" />
    <path d="M10 5 13 4 11 8Z" fill="#ffe8a0" />
  </svg>
);

const palettes = [
  { title: "E...", x: 267, y: 80, w: 43, tools: "exit", slim: true },
  { title: "S", x: 342, y: 87, w: 36, tools: "sketch+", column: true },
  {
    title: "Sketch-Based Features",
    x: 403,
    y: 95,
    w: 301,
    tools: "pad+ pocketOff+ shaft grooveOff holeOff rib slotOff cube+ loft loftOff",
  },
  {
    title: "Dress-Up Features",
    x: 750,
    y: 70,
    w: 217,
    tools: "filletOff+ chamferOff draftOff+ shellOff thickOff threadOff replaceOff+",
  },
  { title: "Transformation Feat...", x: 1076, y: 69, w: 149, tools: "moveOff+ | mirrorOff patternOff+ | scaleOff+" },
  { title: "Reference E...", x: 1265, y: 90, w: 99, tools: "point line plane", slim: true },
  { title: "S...", x: 1394, y: 86, w: 45, tools: "surface+" },
  { title: "Boolean Operations", x: 1467, y: 90, w: 145, tools: "boolA | boolB+ boolC | boolD" },
  { title: "Produ...", x: 1516, y: 185, w: 75, tools: "bookPen+ bookMove+" },
  { title: "Measure", x: 767, y: 786, w: 99, tools: "ruler caliper weight", slim: true },
  { title: "R..", x: 943, y: 774, w: 43, tools: "camera", slim: true },
  { title: "A", x: 1044, y: 770, w: 34, tools: "applyBox", column: true },
  { title: "D..", x: 1123, y: 772, w: 43, tools: "channel", slim: true },
  {
    title: "Tools",
    x: 1210,
    y: 774,
    w: 407,
    tools: "swirlOff hand axes numbers book+ flash stack+ eraser",
    body: "PartBody",
  },
];

const windowHole =
  "M845 361Q846 352 855 350L982 341Q1040 340 1090 358Q1145 380 1192 411Q1218 431 1238 452Q1246 462 1246 480Q1246 495 1238 506Q1229 521 1212 524L874 542Q866 538 865 531L862 500L852 404Z";

const Door = () => (
  <DoorSvg width="500" height="520" viewBox="810 310 500 520">
    <defs>
      <linearGradient id="paint" gradientUnits="userSpaceOnUse" x1="1000" y1="320" x2="1028" y2="808">
        <stop offset="0" stopColor="#b55b5b" />
        <stop offset="0.05" stopColor="#ba6060" />
        <stop offset="0.12" stopColor="#d67a7a" />
        <stop offset="0.19" stopColor="#fa9998" />
        <stop offset="0.23" stopColor="#fb9a99" />
        <stop offset="0.32" stopColor="#d27474" />
        <stop offset="0.4" stopColor="#b95f5f" />
        <stop offset="0.43" stopColor="#ee8b8b" />
        <stop offset="0.46" stopColor="#b75b5b" />
        <stop offset="0.475" stopColor="#a65050" />
        <stop offset="0.49" stopColor="#f09090" />
        <stop offset="0.51" stopColor="#b85c5c" />
        <stop offset="0.6" stopColor="#b55b5b" />
        <stop offset="0.78" stopColor="#a45151" />
        <stop offset="1" stopColor="#864242" />
      </linearGradient>
      <linearGradient id="reveal" gradientUnits="userSpaceOnUse" x1="870" y1="335" x2="1270" y2="500">
        <stop offset="0" stopColor="#676c49" />
        <stop offset="0.22" stopColor="#666b48" />
        <stop offset="0.4" stopColor="#868e64" />
        <stop offset="0.6" stopColor="#98a171" />
        <stop offset="0.85" stopColor="#a5ae79" />
        <stop offset="1" stopColor="#b9c388" />
      </linearGradient>
      <linearGradient id="sill" gradientUnits="userSpaceOnUse" x1="857" y1="0" x2="1270" y2="0">
        <stop offset="0" stopColor="#a3ab79" />
        <stop offset="0.07" stopColor="#919a6a" />
        <stop offset="0.85" stopColor="#919a6a" />
        <stop offset="1" stopColor="#b3bc82" />
      </linearGradient>
      <radialGradient id="dent">
        <stop offset="0" stopColor="#6f3434" />
        <stop offset="0.6" stopColor="#803e3e" stopOpacity="0.75" />
        <stop offset="1" stopColor="#b55b5b" stopOpacity="0" />
      </radialGradient>
      <radialGradient id="shine">
        <stop offset="0" stopColor="#ffd8d6" />
        <stop offset="0.5" stopColor="#f0a0a0" stopOpacity="0.8" />
        <stop offset="1" stopColor="#b55b5b" stopOpacity="0" />
      </radialGradient>
      <radialGradient id="cup">
        <stop offset="0" stopColor="#c05c5c" />
        <stop offset="0.7" stopColor="#cb6868" stopOpacity="0.8" />
        <stop offset="1" stopColor="#b55b5b" stopOpacity="0" />
      </radialGradient>
      <clipPath id="ring">
        <path
          clipRule="evenodd"
          d={`M834 347Q836 337 850 336L974 329Q1015 326 1055 334Q1092 342 1127 359Q1185 388 1234 435Q1252 454 1267 476Q1272 485 1272 495Q1272 510 1266 518Q1256 534 1238 537L878 558Q863 557 857 538L847 438Z ${windowHole}`}
        />
      </clipPath>
    </defs>
    <path
      fill="url(#paint)"
      fillRule="evenodd"
      d={`M816 326L967 317Q1015 314 1058 324Q1090 330 1116 339Q1182 364 1238 409Q1268 436 1293 468Q1302 482 1302 495Q1301 510 1290 521Q1278 532 1261 544L1173 602Q1151 618 1135 638Q1118 659 1110 684Q1102 705 1102 730Q1102 750 1110 777Q1113 796 1095 800L845 814Q848 760 849 720L850 650Q850 600 847 566L841 528L833 438L823 373Z ${windowHole}`}
    />
    <g clipPath="url(#ring)">
      <rect x="830" y="320" width="450" height="250" fill="url(#reveal)" />
      <path d="M820 330 843 342 850 362 870 500V545H850L820 500Z" fill="#98a16e" />
      <path d="M850 548 868 532 1212 520Q1240 515 1280 530V570H850Z" fill="url(#sill)" />
      <path d="M1243 470Q1260 480 1275 495V520L1240 530Z" fill="#b9c388" opacity="0.7" />
    </g>
    <path d={windowHole} fill="none" stroke="#6a14c8" />
    <ellipse cx="1143" cy="580" rx="25" ry="12" fill="url(#dent)" transform="rotate(-8 1143 580)" />
    <ellipse cx="1148" cy="590" rx="26" ry="11" fill="url(#cup)" transform="rotate(-14 1148 590)" />
    <ellipse cx="1144" cy="598" rx="22" ry="5" fill="url(#shine)" opacity="0.6" />
    <ellipse cx="1133" cy="594" rx="14" ry="5" fill="url(#shine)" transform="rotate(10 1133 594)" />
    <path d="M1126 592 1143 586 1138 591 1142 597Z" fill="#ffdcda" opacity="0.6" />
    <path d="M845 814 1095 800Q1107 796 1110 788" fill="none" stroke="#dcd6a0" strokeDasharray="5 13" />
  </DoorSvg>
);

const Compass = () => (
  <CompassSvg width="120" height="150" viewBox="1668 85 120 150" fill="none" stroke="#e0c8ff" strokeWidth="2">
    <path d="M1738 111Q1683 118 1681 174L1740 171L1751 174Q1750 125 1738 111Z" fill="#1c2b48" />
    <path d="M1737 94 1742 221" />
    <circle cx="1737" cy="94" r="2.500" fill="#e0c8ff" />
    <ellipse cx="1738" cy="221" rx="40" ry="3" transform="rotate(-2 1738 221)" fill="#1c2b48" />
    <rect x="1738" y="217" width="8" height="9" fill="#cc0808" stroke="none" />
    <g fill="#f0e020" stroke="none">
      <text x="1726" y="97">z</text>
      <text x="1671" y="177">x</text>
      <text x="1738" y="177">y</text>
    </g>
  </CompassSvg>
);

const TouchPads = () => (
  <PadsSvg width="158" height="316" viewBox="1714 380 158 316">
    <defs>
      <linearGradient id="glass" x1="0" y1="0" x2="1" y2="1">
        <stop offset="0.1" stopColor="#45437a" />
        <stop offset="0.42" stopColor="#56547f" />
        <stop offset="0.7" stopColor="#47457a" />
        <stop offset="1" stopColor="#3f3d74" />
      </linearGradient>
    </defs>
    <g fill="url(#glass)" stroke="#8a89ad" strokeWidth="10">
      <circle cx="1794" cy="440" r="52" />
      <rect x="1747" y="514" width="94" height="94" />
      <rect x="1721" y="629" width="145" height="58" />
    </g>
    <g fill="#76759c">
      <circle cx="1783" cy="468" r="10.500" />
      <rect x="1759" y="581" width="16" height="16" />
      <path d="M1732 659 1850 676H1732Z" />
    </g>
  </PadsSvg>
);

// scratches on the pad: short strokes walked out from a small seeded generator
const scratches = (() => {
  let seed = 7;
  const next = () => (seed = (seed * 16807) % 2147483647) / 2147483647;
  let d = "";
  for (let i = 0; i < 230; i++) {
    const x = 11 + next() * 98;
    const y = 11 + next() * 98;
    if (x > 52 && y < 46) continue;
    const a = next() * 6.28;
    const l = 6 + next() * 18;
    const x2 = Math.min(109, Math.max(11, x + Math.cos(a) * l));
    const y2 = Math.min(109, Math.max(11, y + Math.sin(a) * l));
    d += `M${x.toFixed(1)} ${y.toFixed(1)}L${x2.toFixed(1)} ${y2.toFixed(1)}`;
  }
  return d;
})();

const SketchPad = () => (
  <SketchPadSvg width="120" height="120" viewBox="0 0 120 120">
    <defs>
      <linearGradient id="slate" x1="0" y1="0" x2="1" y2="1">
        <stop offset="0" stopColor="#7f7ea6" />
        <stop offset="0.45" stopColor="#9897b4" />
        <stop offset="0.6" stopColor="#8d8bb0" />
        <stop offset="1" stopColor="#9e9cbd" />
      </linearGradient>
    </defs>
    <rect width="120" height="120" rx="16" fill="#adacc9" />
    <rect x="9" y="9" width="102" height="102" rx="7" fill="url(#slate)" stroke="#8583ae" />
    <path d={scratches} stroke="#bcbbd2" strokeWidth="0.8" opacity="0.5" fill="none" />
    <g fill="#aaa9c9" stroke="#bbbad4">
      <path d="M63 37Q62 24 76 21Q86 22 90 26Q102 22 104 26Q99 29 104 31Q111 36 106 41L90 41 78 40 76 45 65 46Z" />
      <path d="M88 26Q98 24 99 32T88 40" fill="none" />
      <path d="M72 35 94 15 97 18 79 35 64 47Z" />
    </g>
  </SketchPadSvg>
);

const Axis = () => (
  <AxisSvg width="46" height="46" viewBox="1805 942 46 46" fill="none" stroke="#fff">
    <path d="M1836 952V956L1837 981M1815 981H1841" />
    <g fill="#fff" stroke="none">
      <text x="1835" y="950">z</text>
      <text x="1806" y="982">x</text>
      <text x="1841" y="982">y</text>
    </g>
  </AxisSvg>
);

const BodyMark = () => (
  <svg width="30" height="30" viewBox="0 0 30 30" fill="none" shapeRendering="crispEdges">
    <circle cx="17" cy="15" r="10.500" stroke="#101858" strokeWidth="5" strokeDasharray="4.600 3.600" />
    <circle cx="15" cy="15" r="10.500" stroke="#18a8b0" strokeWidth="5" strokeDasharray="4.600 3.600" />
    <circle cx="15" cy="15" r="9" fill="#20d0e0" stroke="#101858" />
    <path d="M8 9 13 12M22 9 18 13M15 19 12 24M20 19 24 23" stroke="#101858" strokeWidth="3" />
    <path d="M6 14H10M17 7 19 9M19 16H23" stroke="#f0f020" strokeWidth="2" />
    <circle cx="13" cy="15" r="3.500" fill="#f0f020" stroke="#101858" strokeWidth="2" />
  </svg>
);

const PlaneMark = () => (
  <svg width="30" height="30" viewBox="0 0 30 30" shapeRendering="crispEdges">
    <defs>
      <pattern id="dots" width="2" height="2" patternUnits="userSpaceOnUse">
        <rect width="1" height="1" fill="#b4b4b8" />
        <rect x="1" y="1" width="1" height="1" fill="#b4b4b8" />
      </pattern>
      <pattern id="weave" width="2" height="2" patternUnits="userSpaceOnUse">
        <rect width="2" height="2" fill="#f0e488" />
        <rect width="1" height="1" fill="#77745c" />
      </pattern>
    </defs>
    <rect width="30" height="30" fill="url(#dots)" />
    <path d="M3 22 10 13H27L21 22Z" fill="url(#weave)" />
    <path d="M2 23H21L28 13" stroke="#108898" strokeWidth="2" fill="none" />
    <path d="M10 13H27" stroke="#15155c" />
  </svg>
);

const PartMark = () => (
  <svg width="30" height="34" viewBox="0 0 30 34">
    <path d="M8 0H22L28 6V21H8Z" fill="#fff" stroke="#109898" />
    <path d="M22 0V6H28Z" fill="#20e0e8" />
    <g fill="none" strokeDasharray="3.500 2.800" strokeWidth="4">
      <circle cx="11" cy="19" r="8" stroke="#222" />
      <circle cx="10" cy="18" r="8" stroke="#f0e080" />
    </g>
    <circle cx="10" cy="18" r="6" fill="#f0e080" stroke="#8a7a30" />
    <circle cx="10" cy="18" r="2.500" fill="#c0b010" stroke="#444" />
  </svg>
);

const SpecTree = () => (
  <>
    <TreeLines width="40" height="150" viewBox="0 100 40 150" fill="none" stroke="#fff" strokeWidth="2">
      <path d="M12 108V240M12 132H28M12 167H28M12 203H28M12 238H28" />
      <circle cx="13" cy="239" r="8" fill="#8a8a90" stroke="none" />
      <path d="M8 239H18M13 234V244" stroke="#000" strokeWidth="3" />
    </TreeLines>
    <Tree>
      <li>
        <PartMark />
        door
      </li>
      {["xy plane", "yz plane", "zx plane"].map((n) => (
        <li key={n}>
          <PlaneMark />
          {n}
        </li>
      ))}
      <li>
        <BodyMark />
        PartBody
      </li>
    </Tree>
  </>
);

export default function App() {
  return (
    <Page>
      <GlobalStyle />
      <TitleBar>
        <AppIcon size={16} />
        <span>CATIA V5 - [Car back door.CATPart]</span>
        <WindowButtons>
          <button type="button" aria-label="Minimize">
            <svg width="10" height="10" stroke="#000">
              <path d="M0 5.500H10" />
            </svg>
          </button>
          <button type="button" aria-label="Restore">
            <svg width="10" height="10" stroke="#000" fill="none">
              <path d="M.5 2.500H7.500V9.500H.5ZM2.500 2.500V.5H9.500V7.500H7.500" />
            </svg>
          </button>
          <button type="button" aria-label="Close">
            <svg width="10" height="10" stroke="#000">
              <path d="M0 0 10 10M10 0 0 10" />
            </svg>
          </button>
        </WindowButtons>
      </TitleBar>

      <MenuBar>
        <AppIcon size={19} />
        <MenuItem $active $pad={8}>
          <u>S</u>tart
        </MenuItem>
        <MenuItem $pad={8}>ENOVIA V5 VPM</MenuItem>
        {["File", "Edit", "View", "Insert", "Tools", "Window", "Help"].map((m) => (
          <MenuItem key={m}>
            <u>{m[0]}</u>
            {m.slice(1)}
          </MenuItem>
        ))}
        <DocButtons>
          <button type="button" aria-label="Minimize document">
            <svg width="9" height="9" stroke="#5f6f80" strokeWidth="2">
              <path d="M1 7H7" />
            </svg>
          </button>
          <button type="button" aria-label="Restore document">
            <svg width="9" height="9" stroke="#5f6f80" fill="none">
              <path d="M.5 4.500H5.500V8.500H.5ZM3 3V1H8.500V6H6M3 1.500H8.500" />
            </svg>
          </button>
          <button type="button" aria-label="Close document">
            <svg width="9" height="9" stroke="#5f6f80" strokeWidth="2">
              <path d="M1 1 8 8M8 1 1 8" />
            </svg>
          </button>
        </DocButtons>
      </MenuBar>

      <TopBar>
        <Group $gap={163}>
          <Grip />
          <Tools names="mail mails mailHelp" />
        </Group>
        <Group $gap={12}>
          <Grip />
          <Tools names="form cursorHelpOff listOff list2Off gearsOff" />
        </Group>
        <Group $gap={91}>
          <Grip />
          <Tools names="open" />
          <Drop label="File type" value="File" $w={76} $h={22} $off $flat />
        </Group>
        <Group $gap={91}>
          <Grip />
          <Tools names="planes" />
        </Group>
        <Group $gap={12}>
          <Grip />
          <Tools names="gearFlow formOff pageGraph treeOff cursorHelpOff pageHelpOff" />
        </Group>
        <Group $gap={10}>
          <Grip />
          <Tools names="blockA blockB blockC" />
        </Group>
        <Group $gap={21}>
          <Grip />
          <Tools names="point+" />
        </Group>
        <Group $gap={14}>
          <Grip />
          <Drop label="Fill colour" value="" $w={64}>
            <Swatch />
          </Drop>
          <Drop label="Transparency" value="Auto" $h={22} $flat />
          <Drop label="Thickness" value="Auto" />
          <Drop label="Line type" value="Auto" />
          <Drop label="Point symbol" value="Auto" $w={42} />
          <Drop label="Rendering" value="Auto" $w={41} $off />
          <Drop label="Layer" value="None" $w={62} $h={22} />
          <Tools names="brush ball" />
        </Group>
      </TopBar>

      <Middle>
        <Viewport>
          <Door />
          <Compass />
          <TouchPads />
          <SketchPad />
          <Axis />
          <SpecTree />
          {palettes.map((p, i) => (
            <Palette key={i} $x={p.x} $y={p.y} $w={p.w}>
              <PaletteHead>
                <h2>{p.title}</h2>
                <button type="button" aria-label={`Close ${p.title}`}>
                  x
                </button>
              </PaletteHead>
              <PaletteBody $column={p.column} $slim={p.slim}>
                {p.column ? <RailGrip /> : <Grip />}
                <Tools names={p.tools} />
                {p.body && <Drop label="In work object" value={p.body} $w={164} $h={23} $flat />}
              </PaletteBody>
            </Palette>
          ))}
        </Viewport>
        <Rail>
          <RailGroup>
            <RailGrip />
            <Tools names="pcs" />
          </RailGroup>
          <RailGroup $gap={9} $pitch={26}>
            <RailGrip />
            <Tools names="people+ curveOff+ pinOff handOff angleOff" />
          </RailGroup>
          <RailGroup $gap={10}>
            <RailGrip />
            <Tools names="setA setB setC setB" />
          </RailGroup>
          <RailGroup $gap={124}>
            <RailGrip />
            <Tools names="gear" />
          </RailGroup>
          <RailGroup $gap={101}>
            <RailGrip />
            <Tools names="gearsColor+ profile+ publishOff" />
          </RailGroup>
          <RailGroup $gap={9}>
            <RailGrip />
            <Tools names="select+" />
          </RailGroup>
          <RailGroup $gap={9}>
            <RailGrip />
            <Tools names="pad+ shaft+ holeOff rib+ cube+ loft+" />
          </RailGroup>
        </Rail>
        <EdgeWindow />
      </Middle>

      <BottomBar>
        <Group>
          <Grip />
          <Tools names="newFile open save print cutOff copyOff paste undoOff+ redoOff+ whatsThis" />
        </Group>
        <Group $gap={41}>
          <Grip />
          <Tools names="moveDiamond turnDiamond noMove arrowPlus arrowMinus arrowEqual rulerPick noEntry" />
        </Group>
        <Group $gap={13}>
          <Grip />
          <Tools names="formula comment figureOff table+ relations lock+ brace" />
        </Group>
        <Group $gap={11}>
          <Grip />
          <Tools names="fly fit pan rotate zoomIn zoomOut normal views box+ cylinder+ hideShow swapSpace" />
        </Group>
        <Group $gap={263}>
          <Grip />
          <Tools names="draftCheck curvature tapTool beam" />
        </Group>
        <Logo width="42" height="32" viewBox="0 0 42 32" fill="none">
          <path d="M9 1Q18 0 17 4T9 10" stroke="#d82028" strokeWidth="2.400" />
          <path d="M5 10Q15 10 12 16T1 22L6 11" stroke="#352c78" strokeWidth="2.200" />
          <path d="M25 8Q16 7 18 12T22 18Q20 22 13 21" stroke="#f0a010" strokeWidth="2.600" />
          <text x="7" y="31" fill="#352c78" fontFamily="Liberation Sans, sans-serif" fontStyle="italic" fontWeight="700" fontSize="10">
            CATIA
          </text>
        </Logo>
      </BottomBar>

      <Status>
        <span>Select an object or a command</span>
        <input type="text" aria-label="Power input" />
        <button type="button" aria-label="Power input mode">
          <svg width="16" height="13" fill="none" stroke="#8a8a94" strokeWidth="1.500">
            <path d="M2 1H10V9H2ZM14 1V12H3" />
          </svg>
        </button>
        <button type="button" aria-label="Information">
          <svg width="16" height="13" fill="none" stroke="#8a8a94" strokeWidth="1.500">
            <circle cx="8" cy="6" r="5" />
            <path d="M8 3V4M8 5V9M14 2V12H2" />
          </svg>
        </button>
      </Status>

      <Watermark>
        <strong>Aktywuj system Windows</strong>
        Przejdź do ustawień, aby aktywować system Windows.
      </Watermark>
    </Page>
  );
}
